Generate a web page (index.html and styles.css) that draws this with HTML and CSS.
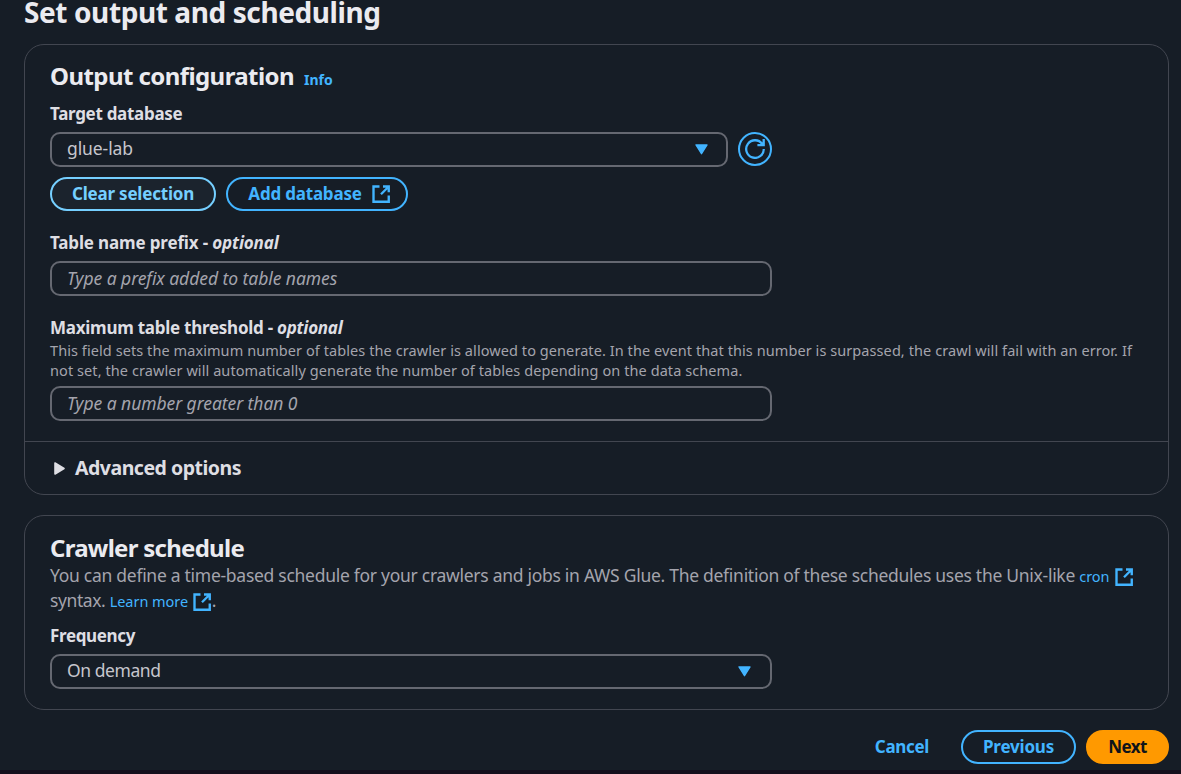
FILE: index.html
```html
<!DOCTYPE html>
<html lang="en">
<head>
<meta charset="utf-8">
<title>Set output and scheduling</title>
<link rel="stylesheet" href="styles.css">
</head>
<body>
<svg class="defs" width="0" height="0" aria-hidden="true">
  <symbol id="external" viewBox="0 0 16 16">
    <path d="M9.6 2h4.6v4.6M8 8.2 14.2 2M14.2 9.2v5H2V2h4.8" fill="none" stroke="currentColor" stroke-width="1.9"/>
  </symbol>
  <symbol id="caret" viewBox="0 0 13 11">
    <path d="M1 .9h11L6.5 9.7z" fill="currentColor" stroke="currentColor" stroke-width="1.4" stroke-linejoin="round"/>
  </symbol>
</svg>
<main class="page">
  <h1 class="title">Set output and scheduling</h1>

  <section class="card output">
    <div class="body">
      <div class="heading"><h2 class="subtitle">Output configuration</h2><a class="info">Info</a></div>

      <label class="label">Target database</label>
      <div class="row">
        <div class="field select grow"><span>glue-lab</span><svg class="caret"><use href="#caret"/></svg></div>
        <button class="refresh" aria-label="Refresh">
          <svg viewBox="0 0 20 20" width="20" height="20" fill="none" stroke="currentColor" stroke-width="2.3"><path d="M12.4 6.2h6.3V0M18.8 10a8.8 8.8 0 1 1-1.6-5l1.2 1.4"/></svg>
        </button>
      </div>
      <div class="row actions">
        <button class="btn clear">Clear selection</button>
        <button class="btn add">Add database <svg class="ext"><use href="#external"/></svg></button>
      </div>

      <label class="label prefix">Table name prefix - <i>optional</i></label>
      <div class="field placeholder prefix-input">Type a prefix added to table names</div>

      <label class="label maximum">Maximum table threshold - <i>optional</i></label>
      <p class="help">This field sets the maximum number of tables the crawler is allowed to generate. In the event that this number is surpassed, the crawl will fail with an error. If<br>not set, the crawler will automatically generate the number of tables depending on the data schema.</p>
      <div class="field placeholder">Type a number greater than 0</div>
    </div>
    <div class="advanced">
      <svg class="disclosure" viewBox="0 0 11 13"><path d="M1 1v11l9-5.5z" fill="currentColor" stroke="currentColor" stroke-width="1.6" stroke-linejoin="round"/></svg>
      <h3 class="expander">Advanced options</h3>
    </div>
  </section>

  <section class="card schedule">
    <h2 class="subtitle crawler">Crawler schedule</h2>
    <p class="desc"><span>You can define a time-based schedule for your crawlers and jobs in AWS Glue. The definition of these schedules uses the Unix-like</span> <a class="link">cron <svg class="ext"><use href="#external"/></svg></a></p>
    <p class="desc"><span class="tight">syntax.</span> <a class="link">Learn more <svg class="ext near"><use href="#external"/></svg></a>.</p>
    <label class="label frequency">Frequency</label>
    <div class="field select demand"><span>On demand</span><svg class="caret"><use href="#caret"/></svg></div>
  </section>

  <footer class="footer">
    <a class="cancel">Cancel</a>
    <button class="btn previous">Previous</button>
    <button class="btn next">Next</button>
  </footer>
</main>
</body>
</html>
```
FILE: styles.css
```css
* { box-sizing: border-box; }
body {
  margin: 0;
  background: #161d26;
  color: #ebebf0;
  font-family: "Noto Sans", "Open Sans", sans-serif;
}
h1, h2, h3, p { margin: 0; }
button { font: inherit; background: none; padding: 0; }
.defs { display: block; height: 0; }
.page {
  height: 774px;
  padding: 0 12px 0 24px;
  overflow: hidden;
  border-bottom: 4px solid #150f1d;
}
.title { font-size: 28px; line-height: 24px; height: 44px; letter-spacing: -.4px; }

.card { border: 1px solid #424650; border-radius: 20px; }
.output { height: 451px; margin-bottom: 20px; }
.body { height: 397px; padding: 14px 25px 0; border-bottom: 1px solid #424650; }
.heading { display: flex; align-items: baseline; gap: 10px; height: 42px; line-height: 34px; }
.subtitle { font-size: 24px; line-height: 34px; letter-spacing: -.572px; }
.info { font-size: 14px; font-weight: 700; color: #42b4ff; }
.label { display: block; font-size: 17px; line-height: 25px; font-weight: 700; letter-spacing: -.3px; color: #dedee3; }
.row { display: flex; gap: 10px; width: 722px; margin-top: 6px; }
.grow { flex: 1; }
.field {
  display: flex;
  align-items: center;
  width: 722px;
  height: 35px;
  padding: 0 19px 3px 15px;
  border: 2px solid #656871;
  border-radius: 10px;
  font-size: 17.5px;
  color: #c6c6cd;
}
.select { justify-content: space-between; letter-spacing: -.087px; }
.demand { letter-spacing: -.436px; }
.placeholder { font-style: italic; color: #a4a4ad; padding-bottom: 2px; letter-spacing: -.06px; }
.caret { width: 13px; height: 11px; color: #42b4ff; margin-top: 3px; }
.grow .caret { margin-right: -1px; }
.refresh {
  display: grid;
  place-items: center;
  width: 34px;
  height: 34px;
  border: 2px solid #42b4ff;
  border-radius: 50%;
  color: #42b4ff;
}
.actions { margin-top: 10px; }
.btn {
  display: flex;
  align-items: center;
  justify-content: center;
  height: 34px;
  padding-bottom: 2px;
  border: 2px solid #42b4ff;
  border-radius: 17px;
  color: #42b4ff;
  font-size: 17px;
  font-weight: 700;
  letter-spacing: -.2px;
}
.clear { width: 166px; border-color: #75cfff; background: #1b232d; color: #75cfff; }
.add { width: 182px; gap: 9px; padding-left: 5px; }
.ext { width: 20px; height: 20px; }
.add .ext { margin-top: 2px; }
.prefix { margin-top: 19px; letter-spacing: -.15px; }
.prefix-input { margin-top: 6px; }
.maximum { margin-top: 19px; letter-spacing: -.26px; }
.help { font-size: 14.5px; line-height: 20px; letter-spacing: .077px; color: #a4a4ad; height: 46px; }
.advanced { display: flex; align-items: center; height: 52px; padding-left: 29px; gap: 10px; color: #dedee3; }
.disclosure { width: 11px; height: 13px; }
.expander { font-size: 19.5px; letter-spacing: -.49px; padding-bottom: 2px; }

.schedule { height: 195px; padding: 15px 25px 0; margin-bottom: 20px; }
.crawler { height: 32px; letter-spacing: -.727px; }
.desc { font-size: 17.5px; line-height: 25px; height: 25px; white-space: nowrap; color: #a4a4ad; letter-spacing: -.28px; }
.tight { letter-spacing: -.4px; }
.link { font-size: 14.5px; letter-spacing: -.05px; color: #42b4ff; }
.link .ext { vertical-align: -5px; margin-left: 1px; }
.link .near { margin-left: 0; }
.frequency { margin-top: 10px; margin-bottom: 6px; letter-spacing: -.357px; }

.footer { display: flex; justify-content: flex-end; align-items: center; }
.cancel { font-size: 17px; font-weight: 700; letter-spacing: -.33px; color: #42b4ff; margin-right: 32px; padding-bottom: 2px; }
.previous { width: 115px; margin-right: 10px; }
.next { width: 83px; background: #ff9900; border-color: #ff9900; color: #0f141a; letter-spacing: -.58px; }
```
